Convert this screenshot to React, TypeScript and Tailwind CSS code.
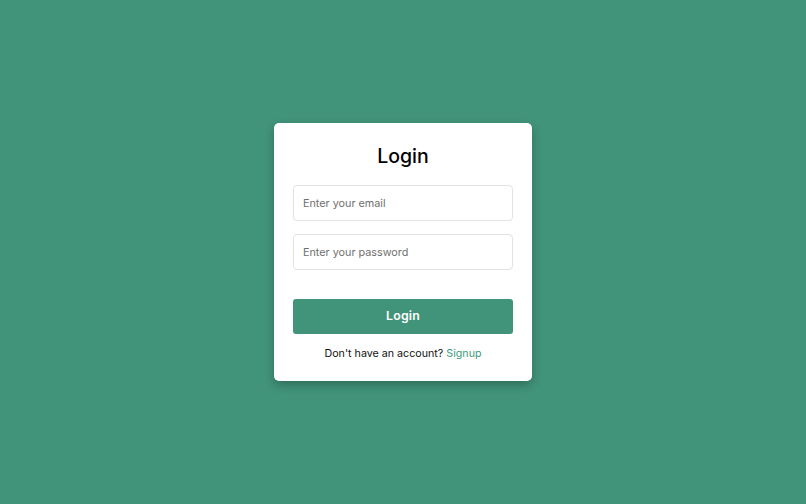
export default function App() {
  return (
    <div
      className="flex min-h-screen w-full items-center justify-center bg-[#41937a]"
      style={{ fontFamily: "Inter, 'Noto Sans', sans-serif" }}
    >
      <form className="flex w-[258px] flex-col rounded-[5px] bg-white px-[19px] pb-[17px] pt-[18px] shadow-[0_4px_10px_rgba(0,0,0,0.25)]">
        <h1 className="mb-[14px] h-[30px] text-center text-[19.5px] font-medium leading-[30px] text-black">
          Login
        </h1>
        <input
          type="email"
          placeholder="Enter your email"
          className="h-[36px] w-full rounded-[4px] border border-[#e2e2e2] px-[9px] text-[10.8px] text-[#333] outline-none placeholder:text-[#6f6f6f]"
        />
        <input
          type="password"
          placeholder="Enter your password"
          className="mt-[13px] h-[36px] w-full rounded-[4px] border border-[#e2e2e2] px-[9px] text-[10.8px] text-[#333] outline-none placeholder:text-[#6f6f6f]"
        />
        <button
          type="button"
          className="mt-[29px] h-[35px] w-full rounded-[3px] bg-[#41937a] text-[12.3px] font-semibold tracking-[0.2px] text-white"
        >
          Login
        </button>
        <div className="mt-[10px] h-[20px] text-center text-[10.7px] leading-[20px] text-[#111]">
          Don't have an account?{" "}
          <a href="#" className="text-[#3a9b7a]">
            Signup
          </a>
        </div>
      </form>
    </div>
  );
}
